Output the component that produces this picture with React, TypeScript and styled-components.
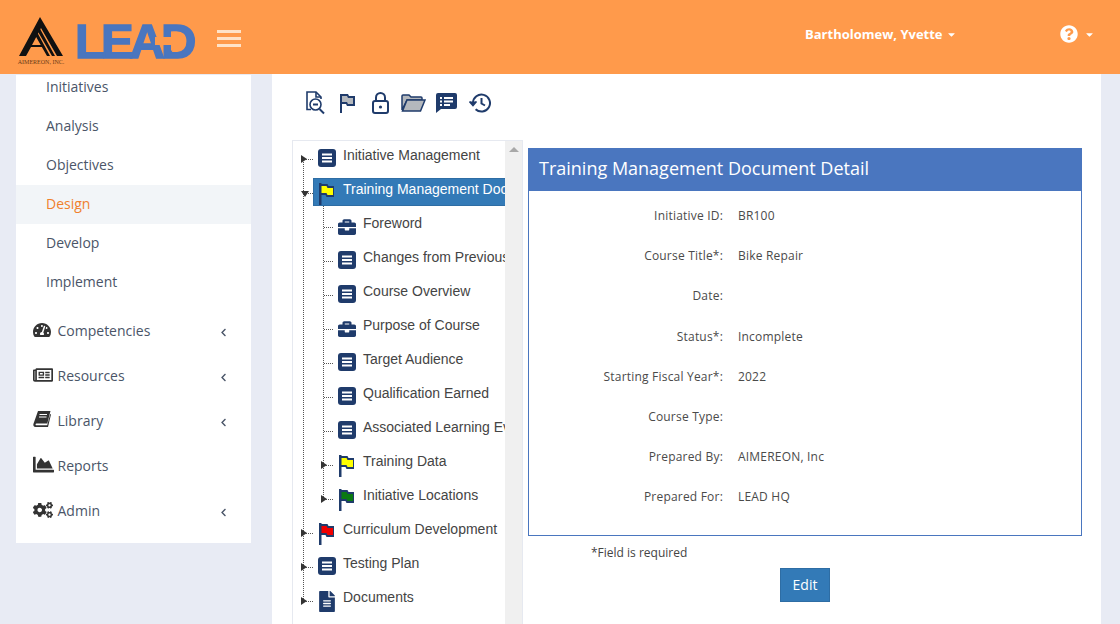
import React from 'react'
import styled, { createGlobalStyle } from 'styled-components'
import { FaBriefcase, FaCaretDown, FaChartArea, FaChevronLeft, FaCogs, FaFileAlt, FaQuestionCircle, FaRegNewspaper, FaTachometerAlt } from 'react-icons/fa'

const navy = '#1f3b6b'

const GlobalStyle = createGlobalStyle`
  html, body {
    margin: 0;
    height: 100%;
    overflow: hidden;
    background: #e8ebf4;
    font-family: 'Open Sans', 'Liberation Sans', sans-serif;
  }
`

const Page = styled.div`
  width: 1120px;
  height: 624px;
  overflow: hidden;
  display: flex;
  flex-flow: column nowrap;
`

const Header = styled.header`
  height: 74px;
  flex: none;
  background: #ff9a4b;
  display: flex;
  align-items: center;
  position: relative;
  z-index: 2;
`

const LogoMark = styled.div`
  width: 48px;
  margin-left: 17px;
  display: flex;
  flex-flow: column nowrap;
  align-items: center;
  margin-top: 8px;
`

const LogoCaption = styled.span`
  font-family: 'Liberation Serif', serif;
  font-size: 6px;
  line-height: 7px;
  margin-top: 2px;
  color: #6b3a18;
  white-space: nowrap;
`

const LeadWord = styled.div`
  position: relative;
  margin-left: 10px;
  width: 120px;
  height: 36px;
  font-family: 'Liberation Sans', sans-serif;
  font-weight: 700;
  font-size: 49px;
  line-height: 36px;
  letter-spacing: -4px;
  color: #4a76bf;
  -webkit-text-stroke: 1.5px #4a76bf;
  margin-top: 7px;
`

const LeadArrow = styled.svg`
  position: absolute;
  right: 12px;
  top: 8px;
`

const Burger = styled.div`
  width: 24px;
  margin-left: 22px;
  margin-top: 2px;
  display: flex;
  flex-flow: column nowrap;
  gap: 4px;
  span {
    height: 3px;
    background: #ffe3c8;
  }
`

const UserMenu = styled.div`
  margin-left: 564px;
  margin-top: -6px;
  font-size: 13px;
  font-weight: 700;
  color: #fff;
  display: flex;
  align-items: center;
  gap: 3px;
  width: 255px;
`

const HelpMenu = styled.div`
  color: #fff;
  display: flex;
  align-items: center;
  gap: 6px;
  margin-top: -6px;
`

const Body = styled.div`
  flex: 1;
  display: flex;
  padding-left: 16px;
  min-height: 0;
`

const Sidebar = styled.nav`
  width: 235px;
  height: 468px;
  margin-top: 1px;
  background: #fff;
  overflow: hidden;
  flex: none;
`

const SubList = styled.div`
  margin-top: -7px;
  margin-bottom: 6px;
`

const SubItem = styled.div<{ $active?: boolean }>`
  height: 39px;
  line-height: 38px;
  padding-left: 30px;
  font-size: 14px;
  color: ${({ $active }) => ($active ? '#f0802c' : '#4a5568')};
  background: ${({ $active }) => ($active ? '#f2f5f8' : 'transparent')};
`

const MenuItem = styled.div`
  height: 45px;
  display: flex;
  align-items: center;
  font-size: 14px;
  color: #4a5568;
  position: relative;
`

const MenuIcon = styled.span`
  width: 41.5px;
  padding-left: 17px;
  box-sizing: border-box;
  flex: none;
  display: flex;
  align-items: center;
  color: #333;
  margin-top: -2px;
`

const Chevron = styled.span`
  margin-left: auto;
  margin-right: 23px;
  display: flex;
  color: #4a5568;
  margin-top: 3px;
`

const Main = styled.main`
  width: 829px;
  margin-left: 21px;
  background: #fff;
  padding-left: 20px;
  box-sizing: border-box;
  margin-top: 0;
`

const Toolbar = styled.div`
  height: 66px;
  display: flex;
  align-items: center;
  padding-left: 6px;
  padding-top: 0;
  box-sizing: border-box;
  margin-top: -4px;
`

const ToolSlot = styled.span`
  width: 33px;
  display: flex;
  justify-content: center;
`

const Columns = styled.div`
  display: flex;
  align-items: flex-start;
  padding-top: 4px;
`

const TreePanel = styled.div`
  width: 231px;
  height: 490px;
  box-sizing: border-box;
  border: 1px solid #e6e9f0;
  border-bottom: 0;
  display: flex;
  flex: none;
`

const TreeScroll = styled.div`
  width: 212px;
  overflow: hidden;
  flex: none;
  font-family: 'Liberation Sans', Arial, sans-serif;
  font-size: 14px;
  color: #444;
`

const ScrollTrack = styled.div`
  flex: 1;
  background: #f0f0f0;
  display: flex;
  justify-content: center;
  padding-top: 6px;
  &::before {
    content: '';
    width: 0;
    height: 0;
    border-left: 5px solid transparent;
    border-right: 5px solid transparent;
    border-bottom: 5px solid #a8a8a8;
  }
`

const Branch = styled.div<{ $x: number; $h: number; $top: number }>`
  position: relative;
  &::before {
    content: '';
    position: absolute;
    left: ${({ $x }) => $x}px;
    top: ${({ $top }) => $top}px;
    height: ${({ $h }) => $h}px;
    border-left: 1px dotted #555;
  }
`

const TreeRow = styled.div<{ $level: number }>`
  height: 34px;
  display: flex;
  align-items: center;
  position: relative;
  white-space: nowrap;
  padding-left: ${({ $level }) => 20 + $level * 20}px;
`

const Link = styled.div<{ $selected?: boolean }>`
  height: 28px;
  display: flex;
  align-items: flex-start;
  box-sizing: border-box;
  flex: ${({ $selected }) => ($selected ? 1 : 'none')};
  padding-left: 4px;
  gap: 7px;
  background: ${({ $selected }) => ($selected ? '#337ab7' : 'transparent')};
  border: 1px solid ${({ $selected }) => ($selected ? '#2e6da4' : 'transparent')};
  color: ${({ $selected }) => ($selected ? '#fff' : '#444')};
  line-height: 20px;
`

const Connector = styled.span<{ $level: number }>`
  position: absolute;
  left: ${({ $level }) => 11 + $level * 20}px;
  top: 18px;
  width: 9px;
  border-top: 1px dotted #555;
`

const Toggle = styled.span<{ $level: number; $open?: boolean }>`
  position: absolute;
  left: ${({ $level }) => 8 + $level * 20}px;
  top: 14px;
  width: 0;
  height: 0;
  ${({ $open }) =>
    $open
      ? `border-left: 4px solid transparent; border-right: 4px solid transparent; border-top: 6px solid #333; top: 16px;`
      : `border-top: 4px solid transparent; border-bottom: 4px solid transparent; border-left: 6px solid #333;`}
`

const NodeIcon = styled.span`
  width: 18px;
  height: 22px;
  margin-top: 4px;
  flex: none;
  display: flex;
  justify-content: center;
  color: ${navy};
`

const DetailColumn = styled.div`
  width: 554px;
  margin-left: 5px;
  margin-top: 8px;
  display: flex;
  flex-flow: column nowrap;
`

const DetailPanel = styled.section`
  height: 388px;
  box-sizing: border-box;
  border: 1px solid #4a76bf;
`

const DetailTitle = styled.h2`
  margin: 0;
  height: 42px;
  background: #4a76bf;
  color: #fff;
  font-size: 18px;
  font-weight: 400;
  line-height: 38px;
  padding-left: 10px;
`

const DetailBody = styled.div`
  padding-top: 4.4px;
`

const Field = styled.div`
  height: 40.2px;
  display: flex;
  align-items: center;
  font-size: 12px;
  font-weight: 500;
  letter-spacing: 0.2px;
  color: #4a4a4a;
`

const FieldLabel = styled.span`
  width: 194px;
  text-align: right;
  margin-right: 15px;
`

const Required = styled.div`
  font-size: 12px;
  color: #444;
  margin-top: 8px;
  padding-left: 63px;
  line-height: 17px;
`

const EditButton = styled.button`
  align-self: center;
  width: 50px;
  height: 34px;
  margin-top: 7px;
  padding: 0 0 2px;
  background: #337ab7;
  border: 1px solid #2e6da4;
  color: #fff;
  font-family: inherit;
  font-size: 14px;
`

const ListIcon = () => (
  <svg width="18" height="18" viewBox="0 0 18 18">
    <rect width="18" height="18" rx="3" fill={navy} />
    <path d="M4 4.500h10v2H4zM4 8h10v2H4zM4 11.500h10v2H4z" fill="#fff" />
  </svg>
)

const FlagIcon = ({ color }: { color: string }) => (
  <svg width="16" height="22" viewBox="0 0 16 22">
    <path d="M0 0h2.500v22H0z" fill={navy} />
    <path d="M0 1h8.500l1 2H15v11H7.500l-1-2H0z" fill={navy} />
    <path d="M2.500 3h5l1 2H14v7H8.500l-1-2h-5z" fill={color} />
  </svg>
)

const treeIcon = (kind: string) => {
  switch (kind) {
    case 'case':
      return <FaBriefcase size={20} />
    case 'doc':
      return <FaFileAlt size={21} />
    case 'list':
      return <ListIcon />
    default:
      return <FlagIcon color={kind} />
  }
}

type NodeProps = { level: number; icon: string; label: string; toggle?: boolean; open?: boolean; selected?: boolean }

const TreeNode = ({ level, icon, label, toggle, open, selected }: NodeProps) => (
  <TreeRow $level={level}>
    <Connector $level={level} />
    {toggle && <Toggle $level={level} $open={open} />}
    <Link $selected={selected}>
      <NodeIcon>{treeIcon(icon)}</NodeIcon>
      <span>{label}</span>
    </Link>
  </TreeRow>
)

const BookIcon = () => (
  <svg width="18" height="17" viewBox="0 0 18 17">
    <path d="M5 0h12.500l-3.200 12.500H3.500c-1 0-1.400 1.800-.2 1.800h10.900l3-11.300.8.500-3 12.500H2.500C.7 16 0 14.500.4 13z" fill="#333" />
    <path d="M6.500 3.500h7.500M6 6h7.500" stroke="#fff" strokeWidth="1" />
  </svg>
)

const subItems = ['Initiatives', 'Analysis', 'Objectives', 'Design', 'Develop', 'Implement']

const menuItems = [
  { label: 'Competencies', icon: <FaTachometerAlt size={18} />, more: true },
  { label: 'Resources', icon: <FaRegNewspaper size={20} />, more: true },
  { label: 'Library', icon: <BookIcon />, more: true },
  { label: 'Reports', icon: <FaChartArea size={21} />, more: false },
  { label: 'Admin', icon: <FaCogs size={20} />, more: true },
]

const fields = [
  ['Initiative ID:', 'BR100'],
  ['Course Title*:', 'Bike Repair'],
  ['Date:', ''],
  ['Status*:', 'Incomplete'],
  ['Starting Fiscal Year*:', '2022'],
  ['Course Type:', ''],
  ['Prepared By:', 'AIMEREON, Inc'],
  ['Prepared For:', 'LEAD HQ'],
]

const children = [
  { icon: 'case', label: 'Foreword' },
  { icon: 'list', label: 'Changes from Previous Version' },
  { icon: 'list', label: 'Course Overview' },
  { icon: 'case', label: 'Purpose of Course' },
  { icon: 'list', label: 'Target Audience' },
  { icon: 'list', label: 'Qualification Earned' },
  { icon: 'list', label: 'Associated Learning Events' },
  { icon: '#ffff00', label: 'Training Data', toggle: true },
  { icon: '#0a7a12', label: 'Initiative Locations', toggle: true },
]

const App = () => {
  return (
    <Page>
      <GlobalStyle />
      <Header>
        <LogoMark>
          <svg width="44" height="40" viewBox="0 0 44 40">
            <path d="M0 39L21 0l23 39h-6L22 11 13 28h11l1 2H12l-5 9z" fill="#111" />
            <path d="M22 4l20 35h-3L21 8zM20 10l16 29h-3L18 13zM18 15l13 24h-3L16 18z" fill="#111" />
          </svg>
          <LogoCaption>AIMEREON, INC.</LogoCaption>
        </LogoMark>
        <LeadWord>
          LEAD
          <LeadArrow width="28" height="20" viewBox="0 0 28 20">
            <path d="M0 6h16V0l12 10-12 10v-6H0z" fill="#ff9a4b" />
          </LeadArrow>
        </LeadWord>
        <Burger>
          <span />
          <span />
          <span />
        </Burger>
        <UserMenu>
          Bartholomew, Yvette <FaCaretDown size={11} />
        </UserMenu>
        <HelpMenu>
          <FaQuestionCircle size={18} />
          <FaCaretDown size={11} />
        </HelpMenu>
      </Header>
      <Body>
        <Sidebar>
          <SubList>
            {subItems.map(item => (
              <SubItem key={item} $active={item === 'Design'}>
                {item}
              </SubItem>
            ))}
          </SubList>
          {menuItems.map(item => (
            <MenuItem key={item.label}>
              <MenuIcon>{item.icon}</MenuIcon>
              {item.label}
              {item.more && (
                <Chevron>
                  <FaChevronLeft size={9} />
                </Chevron>
              )}
            </MenuItem>
          ))}
        </Sidebar>
        <Main>
          <Toolbar>
            <ToolSlot>
              <svg width="20" height="24" viewBox="0 0 20 24" fill="none" stroke={navy} strokeWidth="1.600">
                <path d="M6 18.500H2V1h9l5 5v2" />
                <path d="M11 1v5h5" />
                <circle cx="10.500" cy="13.500" r="5.500" />
                <path d="M8 13.500h5" strokeWidth="2" />
                <path d="M14.500 18l4.500 4.500" strokeWidth="2" />
              </svg>
            </ToolSlot>
            <ToolSlot>
              <svg width="17" height="20" viewBox="0 0 17 20">
                <path d="M1 1h8l1 2h6v10H8l-1-2H3v9H1z" fill={navy} />
                <path d="M3 3h5l1 2h5v6H9l-1-2H3z" fill="#b4b8bd" />
              </svg>
            </ToolSlot>
            <ToolSlot>
              <svg width="17" height="22" viewBox="0 0 17 22" fill="none" stroke={navy} strokeWidth="2">
                <path d="M4 9V5.500a4.500 4.500 0 0 1 9 0V9" />
                <rect x="1" y="9" width="15" height="12" rx="2" />
                <circle cx="8.500" cy="15" r="1.600" fill={navy} stroke="none" />
              </svg>
            </ToolSlot>
            <ToolSlot>
              <svg width="25" height="18" viewBox="0 0 25 18">
                <path d="M1 16V2a1 1 0 0 1 1-1h6l2 2h10a1 1 0 0 1 1 1v2H6L1 16z" fill="#b4b8bd" stroke={navy} strokeWidth="1.500" />
                <path d="M1.500 17l4.500-11h18l-4.500 11z" fill="#b4b8bd" stroke={navy} strokeWidth="1.500" />
              </svg>
            </ToolSlot>
            <ToolSlot>
              <svg width="21" height="20" viewBox="0 0 21 20">
                <path d="M2 0h17a2 2 0 0 1 2 2v12a2 2 0 0 1-2 2H5l-5 4V2a2 2 0 0 1 2-2z" fill={navy} />
                <path d="M4 4h2v2H4zM8 4h9v2H8zM4 7.500h2v2H4zM8 7.500h9v2H8zM4 11h2v2H4zM8 11h6v2H8z" fill="#fff" />
              </svg>
            </ToolSlot>
            <ToolSlot>
              <svg width="22" height="20" viewBox="0 0 22 20" fill="none" stroke={navy} strokeWidth="2">
                <path d="M4 10a8.500 8.500 0 1 1 2.600 6.200" />
                <path d="M0.500 8.500L4 12.500l3.500-4" strokeWidth="1.600" fill={navy} />
                <path d="M12.500 5v5.500l3.500 2" />
              </svg>
            </ToolSlot>
          </Toolbar>
          <Columns>
            <TreePanel>
              <TreeScroll>
                <Branch $x={10} $h={442} $top={18}>
                  <TreeNode level={0} icon="list" label="Initiative Management" toggle />
                  <TreeNode level={0} icon="#ffff00" label="Training Management Document" toggle open selected />
                  <Branch $x={30} $h={293} $top={-3}>
                    {children.map(child => (
                      <TreeNode key={child.label} level={1} icon={child.icon} label={child.label} toggle={child.toggle} />
                    ))}
                  </Branch>
                  <TreeNode level={0} icon="#f00000" label="Curriculum Development" toggle />
                  <TreeNode level={0} icon="list" label="Testing Plan" toggle />
                  <TreeNode level={0} icon="doc" label="Documents" toggle />
                </Branch>
              </TreeScroll>
              <ScrollTrack />
            </TreePanel>
            <DetailColumn>
              <DetailPanel>
                <DetailTitle>Training Management Document Detail</DetailTitle>
                <DetailBody>
                  {fields.map(([label, value]) => (
                    <Field key={label}>
                      <FieldLabel>{label}</FieldLabel>
                      {value}
                    </Field>
                  ))}
                </DetailBody>
              </DetailPanel>
              <Required>*Field is required</Required>
              <EditButton>Edit</EditButton>
            </DetailColumn>
          </Columns>
        </Main>
      </Body>
    </Page>
  )
}

export default App
